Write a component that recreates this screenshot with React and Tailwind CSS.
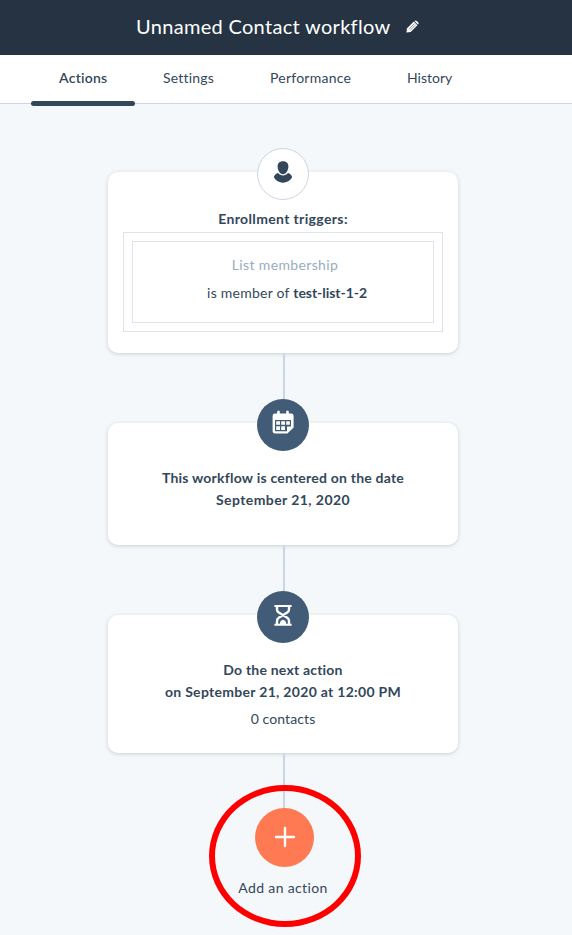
import React from "react";

function PencilIcon() {
  return (
    <svg className="block" width="13" height="13" viewBox="0 0 13 13">
      <path d="M0.4 12.6 L1.1 8.2 L7.8 1.6 L11.4 5.2 L4.7 11.9 Z" fill="#fff" />
      <path d="M8.6 0.9 Q9.7 -0.1 10.8 0.9 L12.1 2.2 Q13.1 3.3 12.1 4.4 L11.9 4.6 L8.4 1.1 Z" fill="#fff" />
      <path d="M2.9 9 L8.4 3.6 M4.2 10.2 L9.7 4.8" stroke="#253342" strokeWidth="0.5" />
    </svg>
  );
}

function PersonIcon() {
  return (
    <svg className="block" width="18" height="22" viewBox="0 0 18 22">
      <path d="M9 0.2 C12.6 0.2 14.5 2.4 14.4 5.6 C14.3 9.4 12.2 13.2 9 13.2 C5.8 13.2 3.7 9.4 3.6 5.6 C3.5 2.4 5.4 0.2 9 0.2 Z" fill="#33475b" />
      <path d="M4 12 C6.6 15.2 11.4 15.2 14 12 C16.4 12.8 17.8 14.3 18.2 16.2 C16.3 19.9 13 21.7 9 21.7 C5 21.7 1.7 19.9 -0.2 16.2 C0.2 14.3 1.6 12.8 4 12 Z" fill="#33475b" />
    </svg>
  );
}

function CalendarIcon() {
  return (
    <svg className="block" width="22" height="24" viewBox="0 0 22 24">
      <path d="M5.2 1.2 Q6.5 0 7.8 1.2 V3.4 H14.2 V1.2 Q15.5 0 16.8 1.2 V3.4 H19.2 Q21.6 3.4 21.6 5.8 V17.4 L15.4 23.6 H3 Q0.6 23.6 0.6 21.2 V5.8 Q0.6 3.4 3 3.4 H5.2 Z" fill="#fff" />
      <path d="M3 10 H19 V16.5 H15 V21.2 H3 Z" fill="#425b76" />
      <path d="M4.2 11.2h3.8v3.6h-3.8z M9.2 11.2h3.8v3.6h-3.8z M14.2 11.2h3.6v3.6h-3.6z M4.2 16.2h3.8v3.7h-3.8z M9.2 16.2h3.8v3.7h-3.8z" fill="#fff" />
    </svg>
  );
}

function HourglassIcon() {
  return (
    <svg className="block" width="18" height="22" viewBox="0 0 18 22" fill="none" stroke="#fff">
      <path d="M0.4 2 H17.6 M0.4 20.8 H17.6" strokeWidth="2" />
      <path d="M3 2.5 V5.5 Q3 7.5 4.8 8.6 L13.2 13.8 Q15 15 15 17 V20.5 M15 2.5 V5.5 Q15 7.5 13.2 8.6 L4.8 13.8 Q3 15 3 17 V20.5" strokeWidth="2.4" />
      <path d="M5.8 20 Q6 16.1 9 15.8 Q12 16.1 12.2 20 Z" fill="#fff" stroke="none" />
    </svg>
  );
}

function Badge({ light, children }) {
  return (
    <div
      className={
        light
          ? "z-10 -mb-7 flex size-[52px] items-center justify-center rounded-full border border-[#cbd6e2] bg-white"
          : "z-10 -mb-7 flex size-[52px] items-center justify-center rounded-full bg-[#425b76]"
      }
    >
      {children}
    </div>
  );
}

function Card({ className, children }) {
  return (
    <section
      className={`flex w-[350px] flex-col items-center rounded-[10px] bg-white text-center shadow-[0_1px_4px_rgba(45,62,80,0.2)] ${className}`}
    >
      {children}
    </section>
  );
}

function Connector({ className }) {
  return <div className={`ml-0.5 w-0.5 bg-[#cbd6e2] ${className}`} />;
}

export default function App() {
  return (
    <div className="flex h-[935px] w-[572px] flex-col overflow-hidden bg-[#f5f8fa] font-[Lato,sans-serif] text-sm text-[#33475b]">
      <header className="flex h-[55px] shrink-0 items-center bg-[#253342] pl-[136px] text-white">
        <h1 className="w-[270px] pb-0.5 text-xl leading-[53px] tracking-[0.31px] whitespace-nowrap">
          Unnamed Contact workflow
        </h1>
        <div className="pb-[3px]">
          <PencilIcon />
        </div>
      </header>

      <nav className="flex h-[49px] shrink-0 border-b border-[#cbd6e2] bg-white pl-[31px] leading-[46px] whitespace-nowrap">
        <a className="flex h-[51px] w-[104px] flex-col pl-7 font-semibold tracking-[0.25px]">
          Actions
          <span className="-ml-7 h-[5px] w-[104px] shrink-0 rounded-[3px] bg-[#33475b]" />
        </a>
        <a className="w-[107px] pl-7 tracking-[0.2px]">Settings</a>
        <a className="w-[137px] pl-7 tracking-[0.24px]">Performance</a>
        <a className="pl-7">History</a>
      </nav>

      <main className="flex w-[566px] flex-col items-center pt-11">
        <Badge light>
          <div className="pb-1">
            <PersonIcon />
          </div>
        </Badge>
        <Card className="h-[181px] pt-[37px]">
          <h2 className="leading-5 font-bold tracking-[0.36px]">Enrollment triggers:</h2>
          <div className="mt-[3px] h-[100px] w-80 border border-[#dfe3eb] p-2">
            <div className="h-[82px] border border-[#dfe3eb] pt-[13px] pl-1">
              <p className="leading-5 tracking-[0.36px] text-[#99acc2]">List membership</p>
              <p className="mt-2 pl-1 leading-5 tracking-[0.25px]">
                is member of <b className="tracking-[-0.05px]">test-list-1-2</b>
              </p>
            </div>
          </div>
        </Card>
        <Connector className="h-[46px]" />

        <Badge>
          <div className="pb-1.5">
            <CalendarIcon />
          </div>
        </Badge>
        <Card className="h-[122px] pt-11 leading-[22px] font-bold">
          <p className="tracking-[0.22px]">This workflow is centered on the date</p>
          <p className="tracking-[0.42px]">September 21, 2020</p>
        </Card>
        <Connector className="h-[46px]" />

        <Badge>
          <div className="pb-1">
            <HourglassIcon />
          </div>
        </Badge>
        <Card className="h-[138px] pt-11 leading-[22px]">
          <p className="font-bold tracking-[0.2px]">Do the next action</p>
          <p className="font-bold tracking-[0.3px]">on September 21, 2020 at 12:00 PM</p>
          <p className="mt-[5px] tracking-[0.1px]">0 contacts</p>
        </Card>
        <Connector className="h-[55px]" />

        <div className="relative flex flex-col items-center">
          <button className="ml-[3px] flex size-[59px] items-center justify-center rounded-full bg-[#ff7a53] pb-px">
            <svg className="block" width="22" height="22" viewBox="0 0 22 22">
              <path d="M11 2 V20 M2 11 H20" stroke="#fff" strokeWidth="2.4" strokeLinecap="round" />
            </svg>
          </button>
          <p className="mt-2.5 leading-[22px] tracking-[0.36px] whitespace-nowrap">Add an action</p>
          <div className="absolute -top-[23px] left-1/2 ml-[-74px] h-[142px] w-[152px] rounded-[50%] border-[6px] border-[#ff0000]" />
        </div>
      </main>
    </div>
  );
}
